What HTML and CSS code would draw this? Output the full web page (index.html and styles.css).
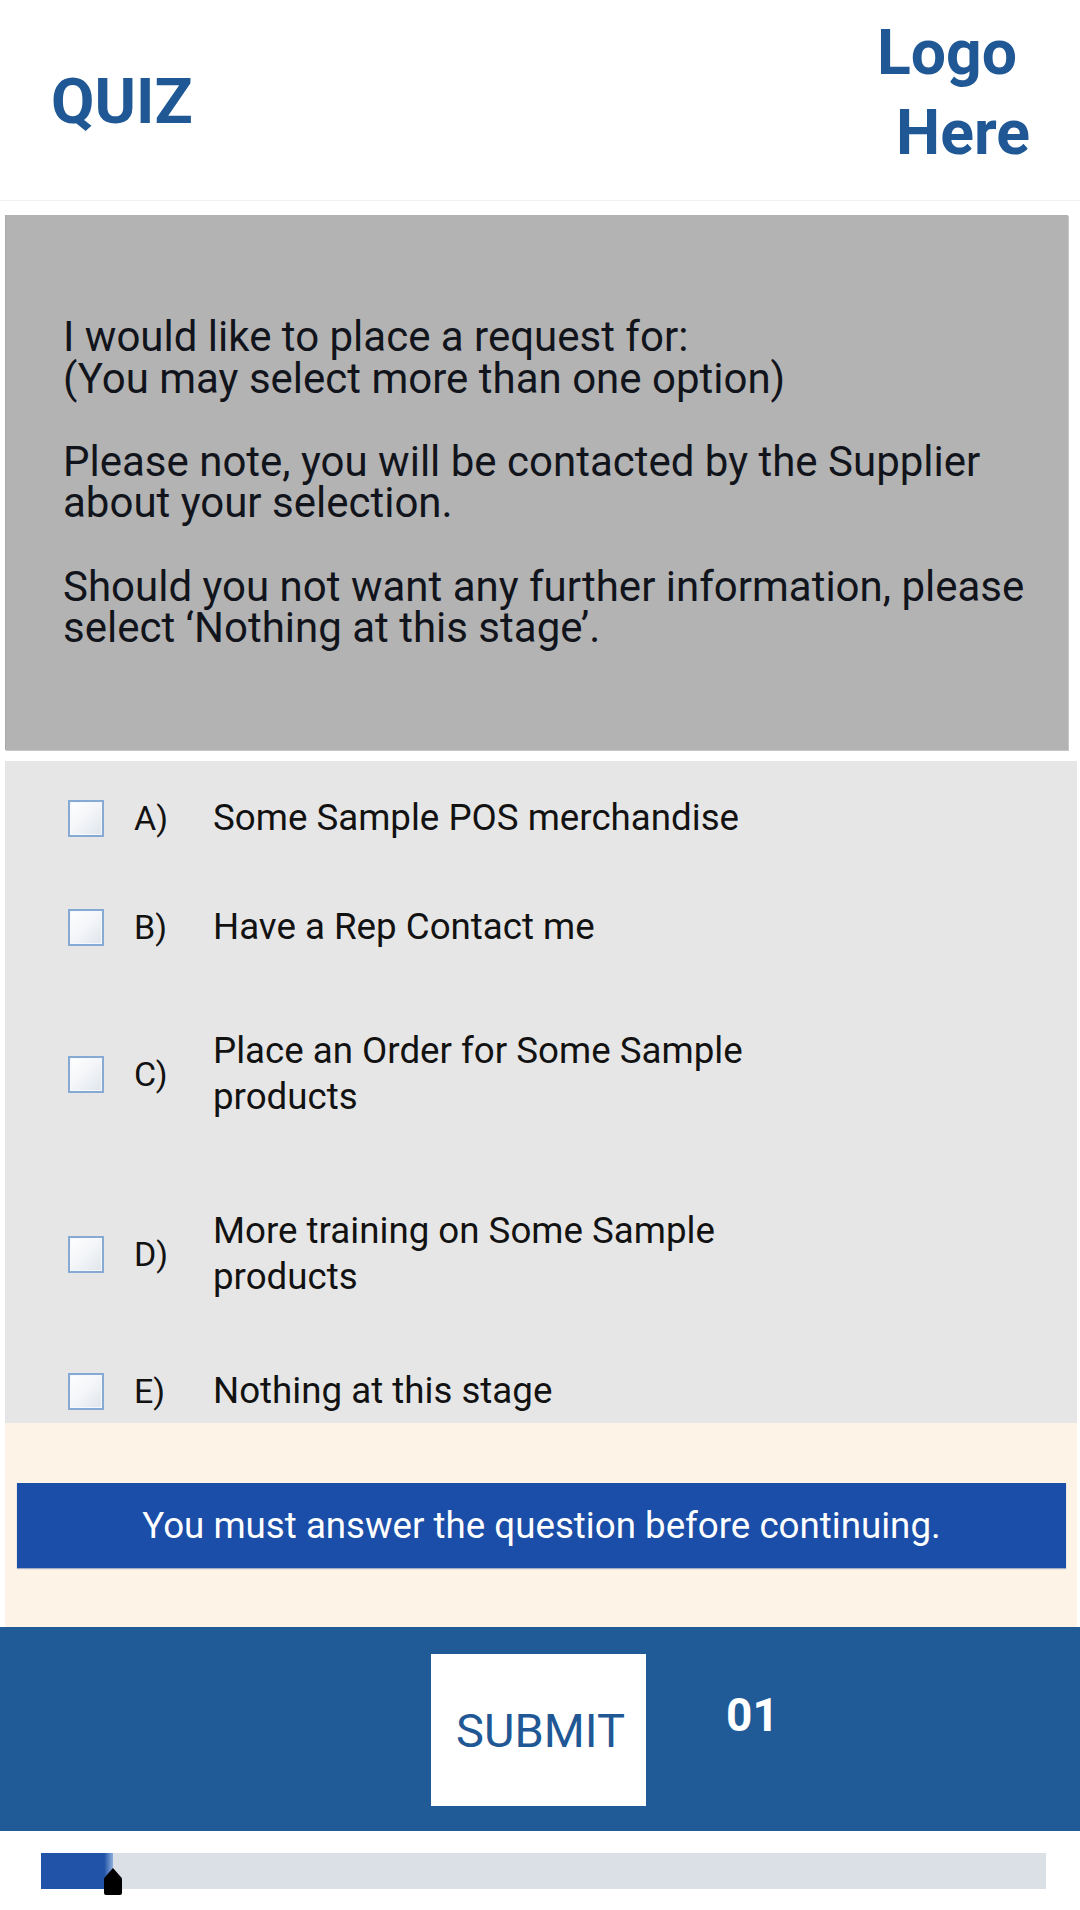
FILE: index.html
```html
<!DOCTYPE html>
<html lang="en">
<head>
<meta charset="utf-8">
<title>Quiz</title>
<link rel="stylesheet" href="styles.css">
</head>
<body>
<div class="page">
  <header class="header">
    <h1 class="quiz-title">QUIZ</h1>
    <div class="logo">
      <span class="logo-line logo-first">Logo</span>
      <span class="logo-line">Here</span>
    </div>
  </header>

  <section class="question">
    <p class="question-text">I would like to place a request for:<br>(You may select more than one option)<br><br>Please note, you will be contacted by the Supplier<br>about your selection.<br><br>Should you not want any further information, please<br>select ‘Nothing at this stage’.</p>
  </section>

  <section class="options">
    <label class="option opt-a"><span class="checkbox"></span><span class="opt-letter">A)</span><span class="opt-text">Some Sample POS merchandise</span></label>
    <label class="option opt-b"><span class="checkbox"></span><span class="opt-letter">B)</span><span class="opt-text">Have a Rep Contact me</span></label>
    <label class="option opt-c"><span class="checkbox"></span><span class="opt-letter">C)</span><span class="opt-text">Place an Order for Some Sample<br>products</span></label>
    <label class="option opt-d"><span class="checkbox"></span><span class="opt-letter">D)</span><span class="opt-text">More training on Some Sample<br>products</span></label>
    <label class="option opt-e"><span class="checkbox"></span><span class="opt-letter">E)</span><span class="opt-text">Nothing at this stage</span></label>
  </section>

  <section class="notice">
    <div class="alert">You must answer the question before continuing.</div>
  </section>

  <footer class="footer">
    <button class="submit" type="button">SUBMIT</button>
    <span class="counter">01</span>
  </footer>

  <div class="progress">
    <div class="progress-track">
      <div class="progress-fill"></div>
      <span class="progress-marker"></span>
    </div>
  </div>
</div>
</body>
</html>
```

FILE: styles.css
```css
* { box-sizing: border-box; }

html, body {
  margin: 0;
  padding: 0;
  background: #ffffff;
}

body {
  font-family: Roboto, "Liberation Sans", Arial, sans-serif;
  width: 1080px;
  height: 1910px;
  overflow: hidden;
}

.page {
  width: 1080px;
}

/* Header */
.header {
  height: 201px;
  border-bottom: 1px solid #f1f1f1;
  display: flex;
  justify-content: space-between;
  align-items: flex-start;
  padding: 0 50px 0 51px;
}

.quiz-title {
  margin: 70px 0 0 0;
  font-size: 63px;
  line-height: 1;
  font-weight: 700;
  color: #1f5894;
}

.logo {
  display: flex;
  flex-direction: column;
  align-items: flex-end;
  padding-top: 13px;
  color: #1f5894;
  font-weight: 700;
  font-size: 62.5px;
  line-height: 80px;
}

.logo-first {
  margin-right: 13px;
}

/* Question box */
.question {
  margin: 14px 12px 0 5px;
  height: 535px;
  background: #b3b3b3;
  border-left: 1px solid #a9a9a9;
  box-shadow: 1px 1px 0 #c6c6c6;
  padding: 101px 20px 0 57px;
}

.question-text {
  margin: 0;
  font-size: 42px;
  line-height: 41.6px;
  color: #12141c;
}

/* Options */
.options {
  margin: 11px 3px 0 5px;
  height: 662px;
  background: #e6e6e6;
  padding-top: 34px;
  display: flex;
  flex-direction: column;
}

.option {
  display: flex;
  align-items: center;
  padding-left: 63px;
  color: #121212;
}

.opt-b { margin-top: 63px; }
.opt-c { margin-top: 78px; }
.opt-d { margin-top: 88px; }
.opt-e { margin-top: 68px; }

.checkbox {
  flex: none;
  width: 36px;
  height: 37px;
  border: 2px solid #86aad3;
  background: linear-gradient(135deg, #ffffff 0%, #f3f5f8 50%, #dfe5ec 100%);
  box-shadow: inset 0 0 0 1px #f4f8fc;
}

.opt-letter {
  flex: none;
  width: 79px;
  margin-left: 30px;
  font-size: 34px;
  line-height: 46px;
}

.opt-text {
  font-size: 36.7px;
  line-height: 46px;
}

/* Notice */
.notice {
  margin: 0 3px 0 5px;
  height: 204px;
  background: #fdf3e7;
  padding: 60px 11px 0 12px;
}

.alert {
  height: 85px;
  background: #1b4ea8;
  color: #ffffff;
  font-size: 36.7px;
  display: flex;
  align-items: center;
  justify-content: center;
  box-shadow: 0 1px 1px rgba(60, 90, 150, 0.45);
}

/* Footer */
.footer {
  height: 204px;
  background: #205b98;
  display: flex;
  align-items: flex-start;
  padding: 27px 0 0 431px;
}

.submit {
  width: 215px;
  height: 152px;
  border: none;
  background: #ffffff;
  color: #1f5894;
  font-family: Roboto, "Liberation Sans", Arial, sans-serif;
  font-size: 47px;
  line-height: 1;
  padding: 0 0 0 4px;
  display: flex;
  align-items: center;
  justify-content: center;
}

.counter {
  margin: 38px 0 0 80px;
  font-size: 46px;
  font-weight: 700;
  line-height: 1;
  color: #ffffff;
}

/* Progress */
.progress {
  padding: 22px 34px 0 41px;
}

.progress-track {
  position: relative;
  height: 36px;
  background: #dae0e6;
}

.progress-fill {
  width: 72px;
  height: 100%;
  background: linear-gradient(90deg, #2153a8 0%, #2153a8 88%, #8fb0dd 100%);
}

.progress-marker {
  position: absolute;
  left: 63px;
  top: 15px;
  width: 18px;
  height: 27px;
  background: #000000;
  clip-path: polygon(50% 0, 100% 38%, 100% 100%, 0 100%, 0 38%);
  border-radius: 2px;
}
```
